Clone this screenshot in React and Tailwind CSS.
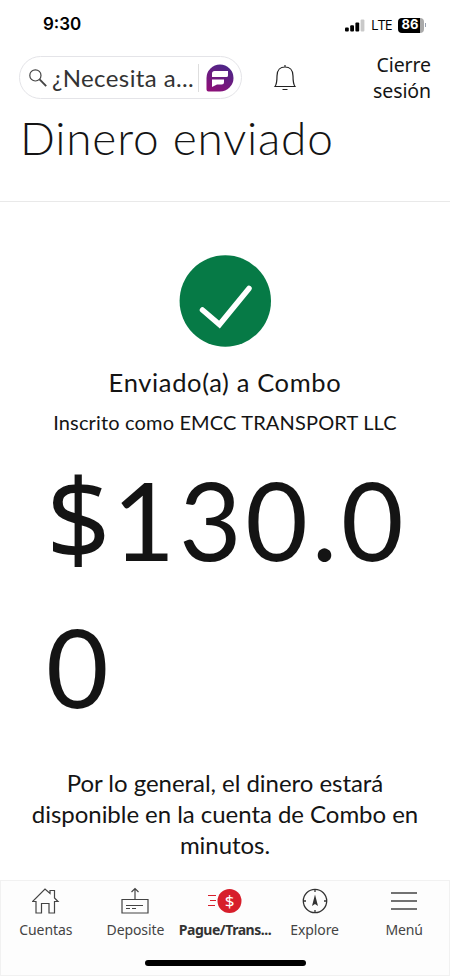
function SearchIcon() {
  return (
    <svg width="18" height="18" viewBox="0 0 18 18" fill="none" stroke="#444" strokeWidth="1.2">
      <circle cx="6.4" cy="6.4" r="5.6" />
      <path d="M10.6 10.4l6.6 6.8" strokeWidth="1.9" />
    </svg>
  )
}

function AssistantLogo() {
  return (
    <svg width="28" height="28" viewBox="0 0 28 28">
      <defs>
        <linearGradient id="assistant" x1="0.2" y1="1" x2="0.7" y2="0">
          <stop offset="0" stopColor="#8d0f78" />
          <stop offset="1" stopColor="#4b2788" />
        </linearGradient>
      </defs>
      <path d="M14 0.5a13.5 13.5 0 0 1 0 27H2.5a2 2 0 0 1-2-2V14A13.5 13.5 0 0 1 14 0.5z" fill="url(#assistant)" />
      <path d="M8.5 7H22v4.500a1.500 1.500 0 0 1-1.500 1.500H6V9.500A2.500 2.500 0 0 1 8.500 7zM6 15.500h12V18a2.500 2.500 0 0 1-2.500 2.500H11L6 23z" fill="#fff" />
    </svg>
  )
}

function BellIcon() {
  return (
    <svg width="24" height="28" viewBox="0 0 24 28" fill="none" stroke="#222" strokeWidth="1.2">
      <path d="M12 1v2M2 22.500c1.500-2 2-6 2-10.500C4 6 7.500 3 12 3s8 3 8 9c0 4.500 0.500 8.500 2 10.500zM9.500 25.500h5" />
    </svg>
  )
}

function HomeIcon() {
  return (
    <svg width="28" height="28" viewBox="0 0 28 28" fill="none" stroke="#444" strokeWidth="1.2">
      <path d="M4 26V14.500H0.500L13 2l5 4.500V3.500h4.500V11l3.500 3.500h-3.500V26H17v-9.500H9.500V26z" />
    </svg>
  )
}

function DepositIcon() {
  return (
    <svg width="28" height="28" viewBox="0 0 28 28" fill="none" stroke="#444" strokeWidth="1.2">
      <path d="M1 12.500h26V26H1zM14 12V1.500M10.500 5L14 1.500 17.500 5M5 18.500h17M5 21.500h4M11 21.500h4" />
    </svg>
  )
}

function PayIcon() {
  return (
    <svg width="36" height="28" viewBox="0 0 36 28" fill="none">
      <circle cx="22.5" cy="14" r="12" fill="#d71e2b" />
      <path d="M1 8.500h8M3 13.500h6M1 18.500h7" stroke="#d71e2b" strokeWidth="1.2" />
      <text x="22.5" y="19.5" fontSize="17" fill="#fff" textAnchor="middle">$</text>
    </svg>
  )
}

function CompassIcon() {
  return (
    <svg width="28" height="28" viewBox="0 0 28 28" fill="none" stroke="#333" strokeWidth="1.3">
      <circle cx="14" cy="14" r="11.7" />
      <path d="M14 2v3M14 23v3M2 14h3M23 14h3" />
      <path d="M14 7.500l3 11.500-3-2-3 2z" fill="#333" stroke="none" />
    </svg>
  )
}

function MenuIcon() {
  return (
    <svg width="28" height="28" viewBox="0 0 28 28" stroke="#444" strokeWidth="1.3">
      <path d="M1 6h26M1 14h26M1 22h26" />
    </svg>
  )
}

const tabs = [
  { label: 'Cuentas', icon: HomeIcon },
  { label: 'Deposite', icon: DepositIcon },
  { label: 'Pague/Trans...', icon: PayIcon, active: true },
  { label: 'Explore', icon: CompassIcon },
  { label: 'Menú', icon: MenuIcon },
]

function StatusBar() {
  return (
    <div className="flex h-12 items-center justify-between pt-[2px] pr-[24px] pl-[43px] font-['Inter',sans-serif] text-black">
      <span className="text-[17px] font-semibold">9:30</span>
      <div className="flex items-center">
        <svg width="20" height="13" viewBox="0 0 20 13">
          <rect x="0" y="8.5" width="3.8" height="4" rx="1" />
          <rect x="5.2" y="6.3" width="3.8" height="6.2" rx="1" />
          <rect x="10.4" y="3.5" width="3.8" height="9" rx="1" />
          <rect x="15.6" y="0.5" width="3.8" height="12" rx="1" fill="#c9c9c9" />
        </svg>
        <span className="ml-[6px] text-[14px] leading-[14px] tracking-[-0.6px] font-['Open_Sans',sans-serif] font-medium">LTE</span>
        <div className="ml-[6px] flex h-[15px] w-[26px] items-center justify-center rounded-[4px] bg-[linear-gradient(90deg,#000_86%,#aaa_86%)] pr-[2px] text-[13px] font-bold text-white">
          86
        </div>
        <span className="ml-px h-1 w-px bg-gray-400" />
      </div>
    </div>
  )
}

function TabBar() {
  return (
    <nav className="mt-auto h-[96px] border border-[#f1f1f1] bg-[#fdfdfd]">
      <div className="flex pt-[6px]">
        {tabs.map(({ label, icon: Icon, active }) => (
          <div key={label} className="flex w-1/5 flex-col items-center">
            <Icon />
            <span className={active ? 'mt-[5px] text-[14px] leading-5 font-bold tracking-[-0.45px] whitespace-nowrap text-[#333]' : 'mt-[5px] text-[14px] leading-5 tracking-[-0.1px] text-[#444]'}>
              {label}
            </span>
          </div>
        ))}
      </div>
      <div className="mx-auto mt-[20px] h-[6px] w-[161px] rounded-full bg-black" />
    </nav>
  )
}

export default function App() {
  return (
    <div className="flex h-[976px] w-[450px] flex-col overflow-hidden bg-white font-['Noto_Sans',sans-serif] text-[#141414]">
      <StatusBar />
      <header className="h-[154px] border-b border-[#e9e9e9]">
        <div className="flex h-[59px] items-center pr-[19px] pl-[19px]">
          <div className="flex h-[43px] w-[223px] items-center rounded-full border border-[#e4e4e8] pl-[9px]">
            <SearchIcon />
            <span className="ml-[5px] w-[143px] text-[24px] tracking-[0.4px] whitespace-nowrap text-[#333] font-['Lato',sans-serif]">¿Necesita a...</span>
            <span className="mr-[7px] ml-[3px] h-7 w-px bg-[#dedede]" />
            <AssistantLogo />
          </div>
          <div className="ml-[31px]">
            <BellIcon />
          </div>
          <div className="ml-auto text-right text-[19.5px] leading-[26px] tracking-[-0.1px]">
            Cierre
            <br />
            sesión
          </div>
        </div>
        <h1 className="ml-[20px] text-[46px] leading-[62px] font-light tracking-[0.8px] whitespace-nowrap font-['Lato',sans-serif]">Dinero enviado</h1>
      </header>

      <main className="flex flex-col items-center pt-[53px] text-center font-['Lato',sans-serif]">
        <svg width="92" height="92" viewBox="0 0 92 92" fill="none">
          <circle cx="46.3" cy="46" r="45.7" fill="#067a46" />
          <path d="M23.500 55L40.500 69.500 70 33.500" stroke="#fff" strokeWidth="5.5" strokeLinecap="round" />
        </svg>
        <p className="mt-[17px] text-[25.5px] leading-9 tracking-[0.65px] whitespace-nowrap">Enviado(a) a Combo</p>
        <p className="mt-[8px] text-[20px] leading-7 tracking-[0.15px] whitespace-nowrap">Inscrito como EMCC TRANSPORT LLC</p>
        <p className="mt-[10px] w-[376px] pl-[9px] text-left text-[108px] leading-[147px] tracking-[3.8px] break-all">
          <span className="text-[113px] leading-none tracking-[1.8px] font-['Noto_Sans',sans-serif]">$</span>130.00
        </p>
        <p className="mt-[27px] w-[400px] text-[24px] leading-[31px] tracking-[-0.04px]">
          Por lo general, el dinero estará disponible en la cuenta de Combo en minutos.
        </p>
      </main>
      <TabBar />
    </div>
  )
}
